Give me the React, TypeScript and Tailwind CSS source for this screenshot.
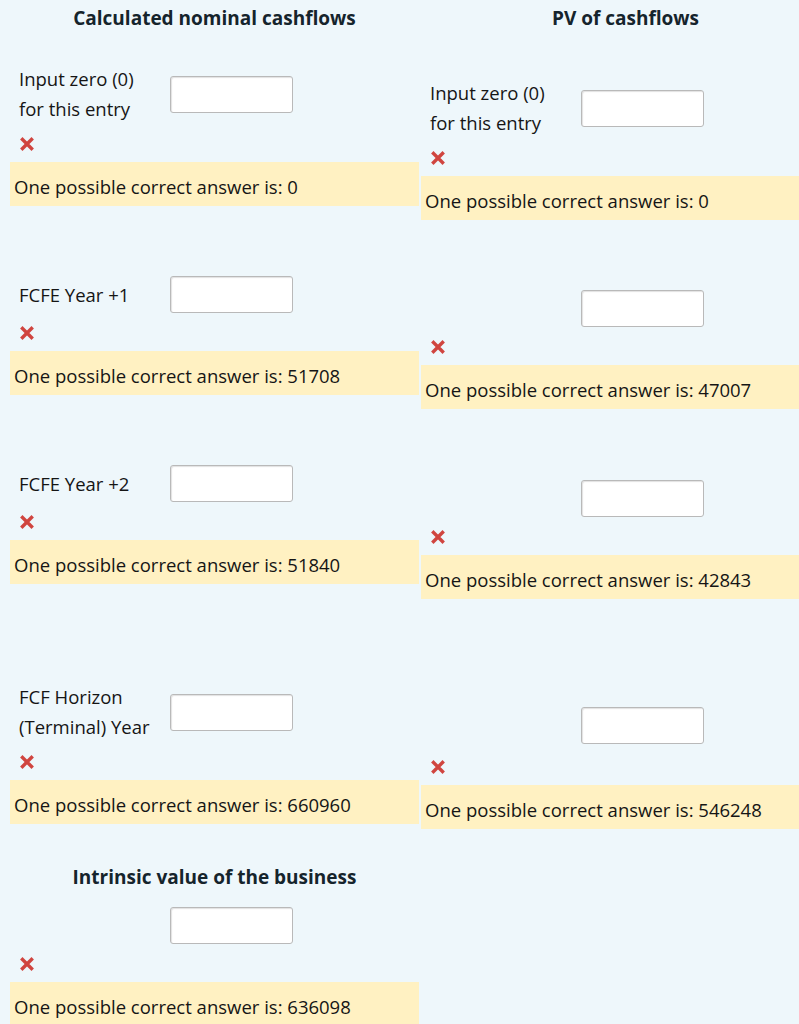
import React from 'react';

type Row = {
  label?: string[];
  answer: string;
  mt: string;
  rowH?: string;
};

const leftRows: Row[] = [
  { label: ['Input zero (0)', 'for this entry'], answer: '0', mt: 'mt-[28px]' },
  { label: ['FCFE Year +1'], answer: '51708', mt: 'mt-[70px]' },
  { label: ['FCFE Year +2'], answer: '51840', mt: 'mt-[70px]' },
  { label: ['FCF Horizon', '(Terminal) Year'], answer: '660960', mt: 'mt-[98px]' },
];

const rightRows: Row[] = [
  { label: ['Input zero (0)', 'for this entry'], answer: '0', mt: 'mt-[42px]' },
  { answer: '47007', mt: 'mt-[70px]' },
  { answer: '42843', mt: 'mt-[71px]' },
  { answer: '546248', mt: 'mt-[105px]', rowH: 'h-[43px]' },
];

function Cross() {
  return (
    <svg width="14" height="14" viewBox="0 0 14 14" className="block">
      <path d="M2.5 2.5 L11.5 11.5 M11.5 2.5 L2.5 11.5" stroke="#d0453f" strokeWidth="3.4" strokeLinecap="square" />
    </svg>
  );
}

function Field() {
  return (
    <div className="w-[123px] h-[37px] bg-white border border-[#b9b9b9] rounded-[3px] shadow-[inset_1px_1px_1px_rgba(0,0,0,0.12)] shrink-0" />
  );
}

function Feedback({ answer }: { answer: string }) {
  return (
    <>
      <div className="mt-[8px] h-[24px] pl-[10px] flex items-center">
        <Cross />
      </div>
      <div className="mt-[6px] h-[44px] bg-[#fff1c2] pl-[4px] pt-[10px] leading-[30px] text-[18.5px] text-[#151515]">
        One possible correct answer is: {answer}
      </div>
    </>
  );
}

function Entry({ row }: { row: Row }) {
  return (
    <div className={row.mt}>
      <div className={`flex items-center ${row.rowH ?? ''}`}>
        <div className="w-[160px] pl-[9px] shrink-0 text-[18.5px] leading-[30px] text-[#151515] whitespace-nowrap">
          {row.label?.map((l) => (
            <div key={l}>{l}</div>
          ))}
        </div>
        <Field />
      </div>
      <Feedback answer={row.answer} />
    </div>
  );
}

function Heading({ children }: { children: React.ReactNode }) {
  return (
    <div className="h-[36px] leading-[36px] text-center font-bold text-[19px] text-[#15242c]">
      {children}
    </div>
  );
}

export default function App() {
  return (
    <div
      className="w-[799px] min-h-[1024px] overflow-hidden bg-[#eef7fb]"
      style={{ fontFamily: '"Open Sans", "Noto Sans", sans-serif' }}
    >
      <div className="w-[830px] pl-[10px] flex gap-[2px]">
        {/* Left column */}
        <div className="w-[409px] shrink-0">
          <Heading>Calculated nominal cashflows</Heading>
          {leftRows.map((r, i) => (
            <Entry key={i} row={r} />
          ))}
          <div className="mt-[35px]">
            <Heading>Intrinsic value of the business</Heading>
          </div>
          <div className="mt-[12px] flex">
            <div className="w-[160px] shrink-0" />
            <Field />
          </div>
          <Feedback answer="636098" />
        </div>

        {/* Right column */}
        <div className="w-[409px] shrink-0">
          <Heading>PV of cashflows</Heading>
          {rightRows.map((r, i) => (
            <Entry key={i} row={r} />
          ))}
        </div>
      </div>
    </div>
  );
}
